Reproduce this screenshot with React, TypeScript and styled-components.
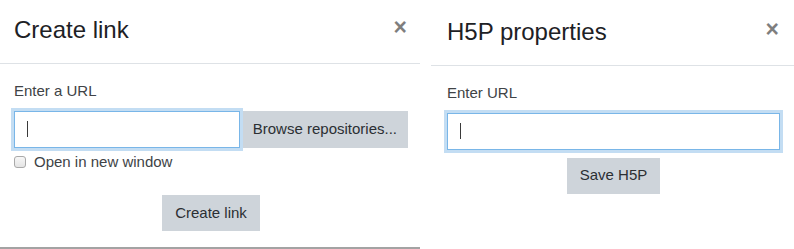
import styled, { createGlobalStyle } from "styled-components";

const GlobalStyle = createGlobalStyle`
  body {
    margin: 0;
    background: #fff;
    font-family: "Liberation Sans", Arial, sans-serif;
  }
`;

const Page = styled.div`
  display: flex;
  align-items: flex-start;
  gap: 11px;
  width: 794px;
`;

const Dialog = styled.section<{ $width: number; $closed?: boolean }>`
  width: ${({ $width }) => $width}px;
  flex-shrink: 0;
  box-sizing: border-box;
  border-bottom: ${({ $closed }) => ($closed ? "2px solid #a3a3a3" : "none")};
`;

const Header = styled.div<{ $top: number; $left: number; $right: number }>`
  display: flex;
  justify-content: space-between;
  align-items: flex-start;
  padding: ${({ $top, $left, $right }) => `${$top}px ${$right}px 19px ${$left}px`};
  border-bottom: 1px solid #dee2e6;
`;

const Title = styled.h2`
  margin: 0;
  font-size: 24px;
  font-weight: 400;
  line-height: 29px;
  color: #1d2125;
`;

const CloseButton = styled.button`
  border: 0;
  padding: 0;
  margin-top: 1px;
  background: none;
  font-family: "Liberation Sans", Arial, sans-serif;
  font-size: 23px;
  font-weight: 700;
  line-height: 23px;
  color: #000;
  opacity: 0.5;
  cursor: pointer;
`;

const Body = styled.div<{ $left: number; $right: number }>`
  padding: ${({ $left, $right }) => `16px ${$right}px 16px ${$left}px`};
`;

const Label = styled.label`
  display: block;
  margin-bottom: 8px;
  font-size: 15px;
  line-height: 22.5px;
  color: #404346;
`;

const InputGroup = styled.div`
  display: flex;
  align-items: stretch;
`;

const Field = styled.div`
  position: relative;
  flex: 1;
`;

const TextInput = styled.input`
  display: block;
  width: 100%;
  height: 37px;
  box-sizing: border-box;
  padding: 0 12px;
  border: 1px solid #79b6e8;
  border-radius: 0;
  box-shadow: 0 0 0 3px #c3ddf3;
  outline: none;
  font-family: "Liberation Sans", Arial, sans-serif;
  font-size: 15px;
  color: #495057;
  background: #fff;
`;

const Caret = styled.span`
  position: absolute;
  left: 13px;
  top: 10px;
  width: 1px;
  height: 16px;
  background: #3a3a3a;
`;

const Button = styled.button<{ $attached?: boolean }>`
  margin-left: ${({ $attached }) => ($attached ? "2px" : "0")};
  padding: ${({ $attached }) => ($attached ? "0 10px" : "0 12px")};
  height: ${({ $attached }) => ($attached ? "37px" : "36px")};
  border: 1px solid #ced4da;
  border-radius: 0;
  background: #ced4da;
  font-family: "Liberation Sans", Arial, sans-serif;
  font-size: 15px;
  line-height: 22.5px;
  color: #2b2f33;
  white-space: nowrap;
  cursor: pointer;
`;

const CheckRow = styled.label`
  display: flex;
  align-items: center;
  gap: 8px;
  margin-top: 3px;
  font-size: 15px;
  line-height: 22.5px;
  color: #404346;
`;

const Checkbox = styled.input`
  appearance: none;
  margin: 0;
  width: 12px;
  height: 12px;
  box-sizing: border-box;
  border: 1px solid #a9a9a9;
  border-radius: 3px;
  background: linear-gradient(#f7f7f7, #e4e4e4);
`;

const Actions = styled.div<{ $gap: number }>`
  display: flex;
  justify-content: center;
  margin-top: ${({ $gap }) => $gap}px;
`;

function UrlField({ attachedButton }: { attachedButton?: string }) {
  return (
    <InputGroup>
      <Field>
        <TextInput type="text" />
        <Caret />
      </Field>
      {attachedButton && <Button $attached>{attachedButton}</Button>}
    </InputGroup>
  );
}

export default function App() {
  return (
    <>
      <GlobalStyle />
      <Page>
        <Dialog $width={420} $closed>
          <Header $top={15} $left={14} $right={13}>
            <Title>Create link</Title>
            <CloseButton aria-label="Close">×</CloseButton>
          </Header>
          <Body $left={14} $right={12}>
            <Label>Enter a URL</Label>
            <UrlField attachedButton="Browse repositories..." />
            <CheckRow>
              <Checkbox type="checkbox" />
              Open in new window
            </CheckRow>
            <Actions $gap={22}>
              <Button>Create link</Button>
            </Actions>
          </Body>
        </Dialog>
        <Dialog $width={363}>
          <Header $top={17} $left={16} $right={15}>
            <Title>H5P properties</Title>
            <CloseButton aria-label="Close">×</CloseButton>
          </Header>
          <Body $left={16} $right={14}>
            <Label>Enter URL</Label>
            <UrlField />
            <Actions $gap={8}>
              <Button>Save H5P</Button>
            </Actions>
          </Body>
        </Dialog>
      </Page>
    </>
  );
}
